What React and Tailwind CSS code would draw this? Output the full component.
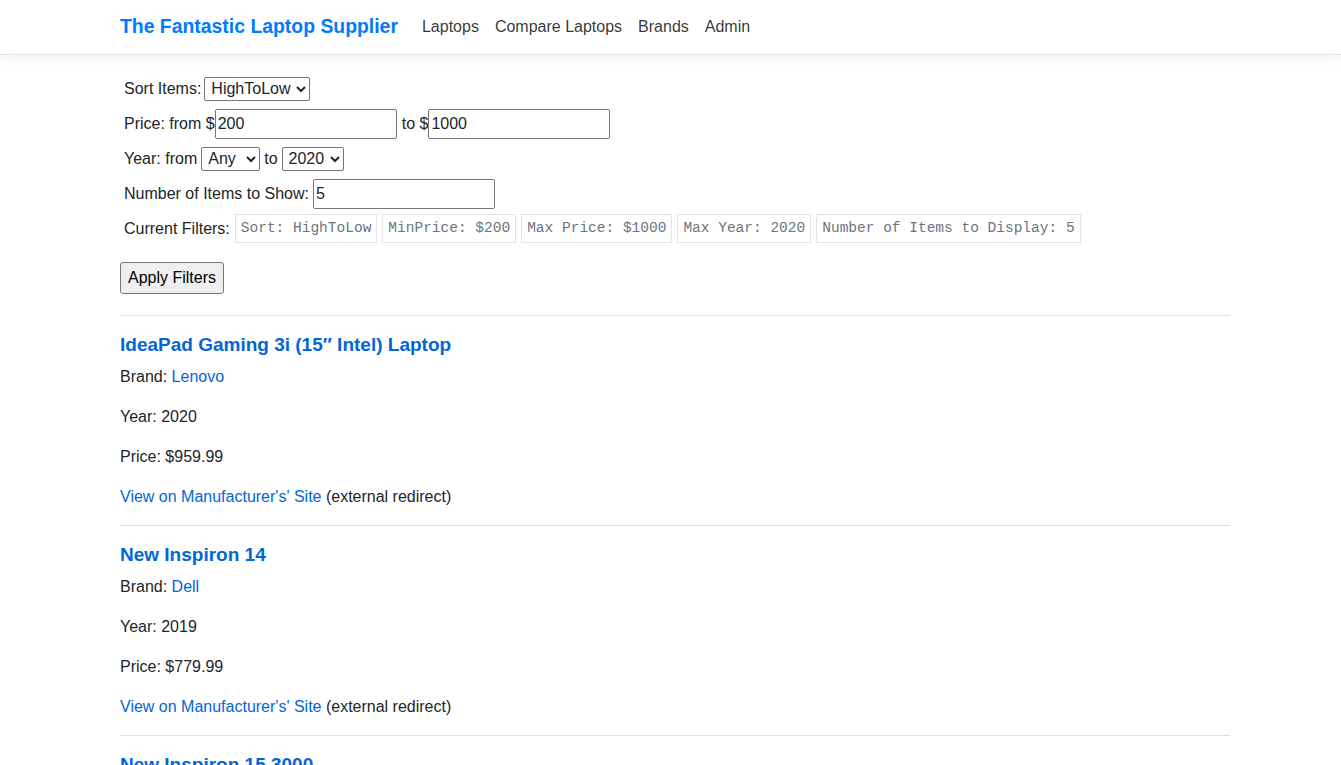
import React, { useState } from 'react';

const laptops = [
  { name: 'IdeaPad Gaming 3i (15″ Intel) Laptop', brand: 'Lenovo', year: 2020, price: '959.99' },
  { name: 'New Inspiron 14', brand: 'Dell', year: 2019, price: '779.99' },
  { name: 'New Inspiron 15 3000', brand: 'Dell', year: 2019, price: '549.99' },
  { name: 'ThinkPad E14', brand: 'Lenovo', year: 2020, price: '499.99' },
  { name: 'Pavilion 15', brand: 'HP', year: 2018, price: '399.99' },
];

function Chip({ children }) {
  return (
    <code className="border border-[#e3e3e3] px-[5px] h-[29px] flex items-center text-[14.5px] text-[#6c757d] font-['Liberation_Mono',monospace]">
      {children}
    </code>
  );
}

function App() {
  const [sort, setSort] = useState('HighToLow');
  const [minPrice, setMinPrice] = useState('200');
  const [maxPrice, setMaxPrice] = useState('1000');
  const [minYear, setMinYear] = useState('Any');
  const [maxYear, setMaxYear] = useState('2020');
  const [count, setCount] = useState('5');

  return (
    <div className="min-h-screen bg-white text-[#212529] text-base font-['Liberation_Sans',Arial,sans-serif]">
      {/* navbar */}
      <nav className="h-[55px] bg-white border-b border-[#e5e5e5] shadow-[0_4px_12px_rgba(0,0,0,0.05)]">
        <div className="w-[1110px] ml-[120px] h-full flex items-center">
          <a href="#" className="text-[19.4px] font-bold text-[#007bff] mr-6">The Fantastic Laptop Supplier</a>
          <ul className="flex items-center gap-4 text-black/80">
            <li><a href="#">Laptops</a></li>
            <li><a href="#">Compare Laptops</a></li>
            <li><a href="#">Brands</a></li>
            <li><a href="#">Admin</a></li>
          </ul>
        </div>
      </nav>

      <main className="w-[1110px] ml-[120px] pt-4">
        {/* filters */}
        <form className="pl-1" onSubmit={(e) => e.preventDefault()}>
          <div className="h-[35px] flex items-center gap-[3px]">
            <span>Sort Items:</span>
            <select value={sort} onChange={(e) => setSort(e.target.value)} className="h-[24px] border border-[#767676] rounded-[2px] px-[2px]">
              <option>HighToLow</option>
              <option>LowToHigh</option>
            </select>
          </div>
          <div className="h-[35px] flex items-center">
            <span>Price: from $</span>
            <input value={minPrice} onChange={(e) => setMinPrice(e.target.value)} className="h-[30px] w-[182px] border border-[#767676] rounded-[2px] px-[2px]" />
            <span className="ml-[5px]">to $</span>
            <input value={maxPrice} onChange={(e) => setMaxPrice(e.target.value)} className="h-[30px] w-[182px] border border-[#767676] rounded-[2px] px-[2px]" />
          </div>
          <div className="h-[35px] flex items-center gap-1">
            <span>Year: from</span>
            <select value={minYear} onChange={(e) => setMinYear(e.target.value)} className="h-[24px] w-[59px] border border-[#767676] rounded-[2px] px-[2px]">
              <option>Any</option>
              <option>2018</option>
              <option>2019</option>
              <option>2020</option>
            </select>
            <span>to</span>
            <select value={maxYear} onChange={(e) => setMaxYear(e.target.value)} className="h-[24px] border border-[#767676] rounded-[2px] px-[2px]">
              <option>Any</option>
              <option>2018</option>
              <option>2019</option>
              <option>2020</option>
            </select>
          </div>
          <div className="h-[35px] flex items-center gap-1">
            <span>Number of Items to Show:</span>
            <input value={count} onChange={(e) => setCount(e.target.value)} className="h-[30px] w-[182px] border border-[#767676] rounded-[2px] px-[2px]" />
          </div>
          <div className="h-[35px] flex items-center gap-[5px]">
            <span>Current Filters:</span>
            <Chip>Sort: {sort}</Chip>
            <Chip>MinPrice: ${minPrice}</Chip>
            <Chip>Max Price: ${maxPrice}</Chip>
            <Chip>Max Year: {maxYear}</Chip>
            <Chip>Number of Items to Display: {count}</Chip>
          </div>
        </form>
        <button className="mt-4 h-[32px] px-[7px] bg-[#efefef] border border-[#767676] rounded-[3px] text-black">
          Apply Filters
        </button>

        {/* results */}
        {laptops.map((l, i) => (
          <div key={i}>
            <hr className={`${i === 0 ? 'mt-[21px]' : 'mt-0'} border-t border-[#e0e0e0]`} />
            <h5 className="mt-[17px] mb-2 text-[19px] leading-[24px] font-semibold text-[#0366d6]">
              <a href="#">{l.name}</a>
            </h5>
            <p className="mb-4 leading-6">Brand: <a href="#" className="text-[#0366d6]">{l.brand}</a></p>
            <p className="mb-4 leading-6">Year: {l.year}</p>
            <p className="mb-4 leading-6">Price: ${l.price}</p>
            <p className="mb-4 leading-6"><a href="#" className="text-[#0366d6]">View on Manufacturer's' Site</a> (external redirect)</p>
          </div>
        ))}
      </main>
    </div>
  );
}

export default App;
